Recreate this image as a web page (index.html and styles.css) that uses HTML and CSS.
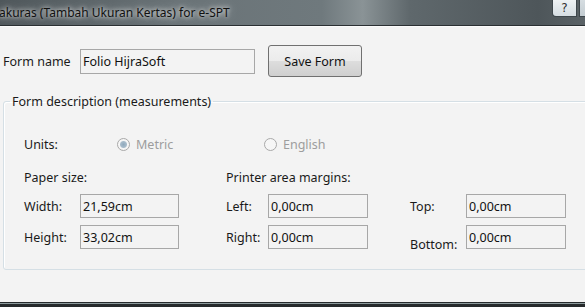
FILE: index.html
```html
<!DOCTYPE html>
<html lang="id">
<head>
    <meta charset="UTF-8">
    <title>Ukuras (Tambah Ukuran Kertas) for e-SPT</title>
    <link rel="stylesheet" href="styles.css">
</head>
<body>
    <div class="window">
        <div class="titlebar">
            <span class="title">akuras (Tambah Ukuran Kertas) for e-SPT</span>
            <div class="caption-buttons">
                <button class="cap help">?</button>
                <button class="cap close"></button>
            </div>
        </div>

        <div class="client">
            <div class="name-row">
                <label class="name-label">Form name</label>
                <input type="text" class="box name-box" value="Folio HijraSoft">
                <button class="save">Save Form</button>
            </div>

            <fieldset class="group">
                <legend>Form description (measurements)</legend>

                <div class="units">
                    <span class="lbl units-lbl">Units:</span>
                    <label class="radio metric"><span class="dot on"></span>Metric</label>
                    <label class="radio english"><span class="dot"></span>English</label>
                </div>

                <div class="heads">
                    <span class="lbl head-paper">Paper size:</span>
                    <span class="lbl">Printer area margins:</span>
                </div>

                <div class="measure">
                    <span class="lbl">Width:</span>
                    <input type="text" class="box" value="21,59cm">
                    <span></span>
                    <span class="lbl">Left:</span>
                    <input type="text" class="box" value="0,00cm">
                    <span></span>
                    <span class="lbl">Top:</span>
                    <input type="text" class="box" value="0,00cm">

                    <span class="lbl">Height:</span>
                    <input type="text" class="box" value="33,02cm">
                    <span></span>
                    <span class="lbl">Right:</span>
                    <input type="text" class="box" value="0,00cm">
                    <span></span>
                    <span class="lbl low">Bottom:</span>
                    <input type="text" class="box" value="0,00cm">
                </div>
            </fieldset>
        </div>

        <div class="frame-bottom"></div>
    </div>
</body>
</html>
```

FILE: styles.css
```css
body {
    margin: 0;
    font-family: "Noto Sans", "Open Sans", sans-serif;
    font-size: 12.5px;
    color: #1a1a1a;
    background: #2b2f31;
    overflow: hidden;
}
.window {
    width: 585px;
    height: 307px;
    display: flex;
    flex-direction: column;
}
.titlebar {
    height: 25px;
    display: flex;
    align-items: flex-start;
    justify-content: space-between;
    background: linear-gradient(to right, #4f575b 0%, #6a7377 30%, #6f797d 55%, #8a9396 62%, #5f686c 70%, #4e565a 92%, #5a6266 100%);
    border-bottom: 1px solid #2a2f32;
    overflow: hidden;
}
.title {
    margin-left: -1px;
    line-height: 25px;
    font-size: 12px;
    color: #111;
    text-shadow: 0 0 4px rgba(255, 255, 255, 0.9), 0 0 8px rgba(255, 255, 255, 0.7);
    white-space: nowrap;
}
.caption-buttons {
    display: flex;
    gap: 2px;
    margin-right: -12px;
}
.cap {
    height: 17px;
    border: 1px solid #3e474c;
    border-top: none;
    padding: 0;
    background: linear-gradient(#eef2f4, #d5dde2);
    font-family: "DejaVu Sans", sans-serif;
    font-size: 12px;
    color: #333;
    line-height: 14px;
}
.help {
    width: 25px;
    border-radius: 0 0 0 4px;
}
.close {
    width: 18px;
    background: linear-gradient(#d6dde1, #c3ccd1);
}
.client {
    flex: 1;
    background: #f3f3f3;
    border-top: 1px solid #fbfbfb;
    display: flex;
    flex-direction: column;
}
.name-row {
    display: flex;
    align-items: center;
    margin-top: 18px;
    height: 32px;
}
.name-label {
    margin-left: 3px;
    width: 77px;
}
.box {
    box-sizing: border-box;
    height: 25px;
    padding: 0 2px;
    border: 1px solid #a7a7a7;
    background: #f3f3f3;
    font-family: inherit;
    font-size: 12.5px;
    color: #111;
}
.name-box {
    width: 175px;
}
.save {
    margin-left: 13px;
    width: 94px;
    height: 32px;
    border: 1px solid #707070;
    border-radius: 3px;
    background: linear-gradient(#f2f2f2 0%, #ebebeb 50%, #dddddd 51%, #cfcfcf 100%);
    font-family: inherit;
    font-size: 12.5px;
    color: #111;
    padding: 0;
}
.group {
    margin: 16px -20px 0 3px;
    padding: 24px 0 0 20px;
    height: 151px;
    border: 1px solid #d5dfe5;
    border-radius: 3px;
    box-shadow: inset 1px 1px 0 #fff;
}
.group legend {
    margin-left: -14px;
    padding: 0 2px;
    font-size: 12.5px;
}
.lbl {
    white-space: nowrap;
}
.units {
    display: flex;
    align-items: center;
    height: 20px;
}
.units-lbl {
    width: 93px;
}
.radio {
    display: flex;
    align-items: center;
    color: #9d9d9d;
}
.metric {
    width: 147px;
}
.dot {
    width: 13px;
    height: 13px;
    border: 1px solid #a9a9a9;
    border-radius: 50%;
    margin-right: 6px;
    background: #f6f6f6;
    box-sizing: border-box;
}
.dot.on {
    background: radial-gradient(circle, #8fa9bd 0, #a8bccb 3px, #f6f6f6 4px);
}
.heads {
    display: flex;
    align-items: center;
    margin-top: 13px;
    height: 20px;
}
.head-paper {
    width: 202px;
}
.measure {
    display: grid;
    grid-template-columns: 56px 99px 47px 42px 100px 42px 56px 100px;
    grid-template-rows: 24px 24px;
    row-gap: 7px;
    align-items: center;
    margin-top: 7px;
}
.measure .box {
    width: 100%;
    height: 24px;
}
.low {
    align-self: end;
    margin-bottom: -4px;
}
.frame-bottom {
    height: 4px;
    border-top: 1px solid #262a2c;
    background: linear-gradient(#8c9a9c 0, #8c9a9c 1px, #262a2c 1px);
}
```
